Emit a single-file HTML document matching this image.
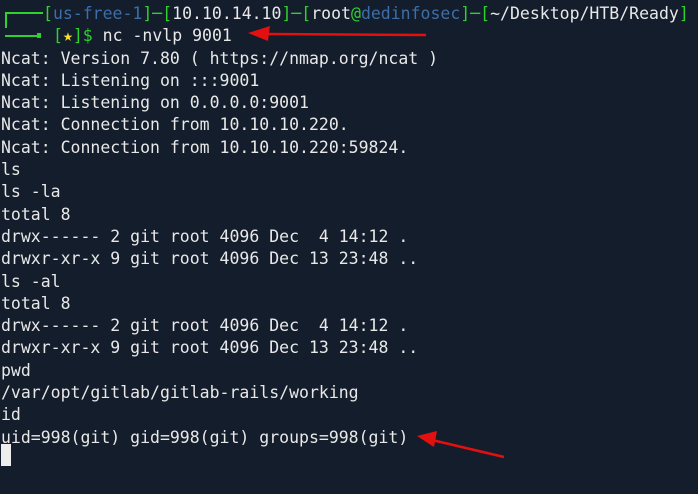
<!DOCTYPE html>
<html><head><style>
html,body{margin:0;padding:0;background:#141d2b;width:698px;height:494px;overflow:hidden}
pre{margin:0;position:absolute;left:1px;top:3px;font-family:"DejaVu Sans Mono","Liberation Mono",monospace;font-size:16.5px;line-height:22.3px;color:#e8e8e8}
.g{color:#2fd12f}.b{color:#3d6ea8}.y{color:#f2e22a}
.ln{position:absolute;background:#2fd12f}
.cur{position:absolute;left:1px;top:444px;width:10px;height:22px;background:#eee}
</style></head><body>
<div class="ln" style="left:5px;top:12px;width:2px;height:16px"></div>
<div class="ln" style="left:5px;top:12px;width:38px;height:2px"></div>
<div class="ln" style="left:5px;top:35px;width:35px;height:2px"></div>
<div class="ln" style="left:37px;top:33px;width:4px;height:5px"></div>
<pre><span style="padding-left:42px"></span><span class="g">[</span><span class="b">us-free-1</span><span class="g">]─[</span>10.10.14.10<span class="g">]─[</span>root<span class="g">@</span><span class="b">dedinfosec</span><span class="g">]─[</span>~/Desktop/HTB/Ready<span class="g">]</span>
<span style="padding-left:52px"></span><span class="g">[</span><span class="y">★</span><span class="g">]$</span> nc -nvlp 9001
Ncat: Version 7.80 ( https://nmap.org/ncat )
Ncat: Listening on :::9001
Ncat: Listening on 0.0.0.0:9001
Ncat: Connection from 10.10.10.220.
Ncat: Connection from 10.10.10.220:59824.
ls
ls -la
total 8
drwx------ 2 git root 4096 Dec  4 14:12 .
drwxr-xr-x 9 git root 4096 Dec 13 23:48 ..
ls -al
total 8
drwx------ 2 git root 4096 Dec  4 14:12 .
drwxr-xr-x 9 git root 4096 Dec 13 23:48 ..
pwd
/var/opt/gitlab/gitlab-rails/working
id
uid=998(git) gid=998(git) groups=998(git)</pre>
<div class="cur"></div>
<svg width="698" height="494" style="position:absolute;left:0;top:0">
<line x1="268" y1="34" x2="426" y2="35" stroke="#e3100f" stroke-width="2.5"/>
<polygon points="248,33 270,26 268,41" fill="#e3100f"/>
<line x1="432" y1="440" x2="504" y2="457" stroke="#e3100f" stroke-width="2.5"/>
<polygon points="417,436 437,431 434,447" fill="#e3100f"/>
</svg>
</body></html>
